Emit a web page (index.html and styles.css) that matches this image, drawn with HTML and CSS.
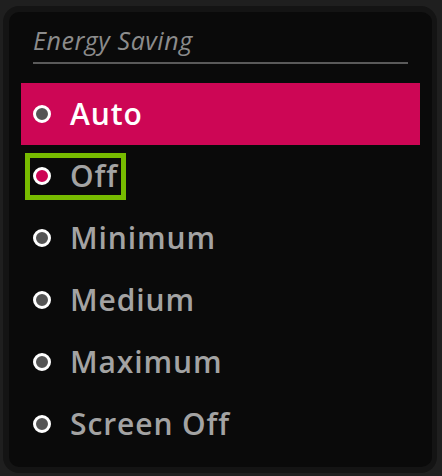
FILE: index.html
```html
<!DOCTYPE html>
<html lang="en">
<head>
    <meta charset="UTF-8">
    <meta name="viewport" content="width=device-width, initial-scale=1.0">
    <title>Energy Saving</title>
    <link rel="stylesheet" href="styles.css">
</head>

<body>
    <div class="panel">
        <div class="title">Energy Saving</div>

        <ul class="options">
            <li class="option selected"><span class="item"><span class="dot"></span>Auto</span></li>
            <li class="option"><span class="item focused"><span class="dot dot-on"></span>Off</span></li>
            <li class="option"><span class="item"><span class="dot"></span>Minimum</span></li>
            <li class="option"><span class="item"><span class="dot"></span>Medium</span></li>
            <li class="option"><span class="item"><span class="dot"></span>Maximum</span></li>
            <li class="option"><span class="item"><span class="dot"></span>Screen Off</span></li>
        </ul>
    </div>
</body>
</html>
```

FILE: styles.css
```css
body {
    margin: 0;
    background-color: #1f1f1f;
    font-family: "Open Sans", Lato, sans-serif;
}

.panel {
    box-sizing: border-box;
    width: 434px;
    height: 467px;
    margin: 6px 0 0 3px;
    border: 6px solid #141414;
    border-right-width: 5px;
    border-radius: 16px;
    background-color: #0a0a0a;
}

.title {
    margin: 0 24px;
    padding-top: 13px;
    height: 37px;
    border-bottom: 2px solid #5a5a5a;
    color: #8c8c8c;
    font-size: 25px;
    font-style: italic;
    letter-spacing: 0.55px;
    line-height: 30px;
}

.options {
    list-style: none;
    margin: 19px 12px 0;
    padding: 0;
}

.option {
    display: flex;
    align-items: center;
    height: 62px;
    padding-left: 4px;
    color: #a3a3a3;
    font-size: 30px;
    font-weight: 600;
    letter-spacing: 0.9px;
}

.option.selected {
    background-color: #cd0655;
    color: #ffffff;
}

.item {
    display: flex;
    align-items: center;
    gap: 19px;
    height: 35px;
    padding: 0 3px 2px 3px;
    border: 5px solid transparent;
}

.item.focused {
    border-color: #77bb00;
}

.dot {
    box-sizing: border-box;
    width: 18px;
    height: 18px;
    margin-top: 2px;
    border: 3px solid #ffffff;
    border-radius: 50%;
    background-color: #555555;
}

.dot-on {
    background-color: #cd0655;
}
```
